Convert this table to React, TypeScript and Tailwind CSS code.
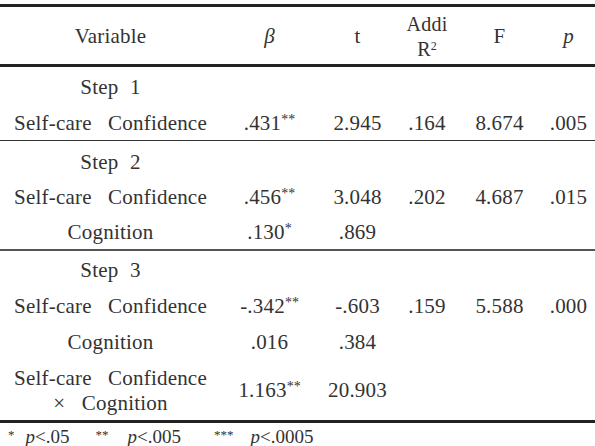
import React from "react";

type Row = {
  label: React.ReactNode;
  ws?: string;
  b?: string;
  star?: string;
  t?: string;
  r2?: string;
  f?: string;
  p?: string;
  h: string;
};

const cols = "grid grid-cols-[221px_97px_79px_60px_85px_53px]";

const Star = ({ s }: { s?: string }) =>
  s ? <span className="relative -top-[6px] text-[14px] tracking-[0px]">{s}</span> : null;

const DataRow = ({ row }: { row: Row }) => (
  <div className={`${cols} ${row.h} items-center text-center`}>
    <div className={row.ws ?? "[word-spacing:11px]"}>{row.label}</div>
    <div>
      {row.b}
      <Star s={row.star} />
    </div>
    <div>{row.t}</div>
    <div>{row.r2}</div>
    <div>{row.f}</div>
    <div>{row.p}</div>
  </div>
);

const step1: Row[] = [
  { label: "Step 1", ws: "[word-spacing:6px]", h: "h-[41px]" },
  { label: "Self-care Confidence", b: ".431", star: "**", t: "2.945", r2: ".164", f: "8.674", p: ".005", h: "h-[32px] pb-[1px]" },
];

const step2: Row[] = [
  { label: "Step 2", ws: "[word-spacing:6px]", h: "h-[39px] pt-[4px]" },
  { label: "Self-care Confidence", b: ".456", star: "**", t: "3.048", r2: ".202", f: "4.687", p: ".015", h: "h-[35px] pt-[1px]" },
  { label: "Cognition", b: ".130", star: "*", t: ".869", h: "h-[34px] pt-[2px]" },
];

const step3: Row[] = [
  { label: "Step 3", ws: "[word-spacing:6px]", h: "h-[39px] pt-[1px]" },
  { label: "Self-care Confidence", b: "-.342", star: "**", t: "-.603", r2: ".159", f: "5.588", p: ".000", h: "h-[34px]" },
  { label: "Cognition", b: ".016", t: ".384", h: "h-[38px]" },
  {
    label: (
      <div className="leading-[25px]">
        Self-care Confidence
        <br />× Cognition
      </div>
    ),
    b: "1.163",
    star: "**",
    t: "20.903",
    h: "h-[58px]",
  },
];

export default function App() {
  return (
    <div className="w-[595px] h-[446px] overflow-hidden bg-white text-[#333] text-[21px] tracking-[0.2px] font-['Liberation_Serif']">
      <div className="mt-[4px] border-t-[3px] border-[#222]" />
      <div className={`${cols} h-[57px] items-center text-center pt-[3px]`}>
        <div>Variable</div>
        <div className="italic">β</div>
        <div>t</div>
        <div className="text-[20px] leading-[25px]">
          Addi
          <br />
          R<sup className="text-[12px]">2</sup>
        </div>
        <div>F</div>
        <div className="italic">p</div>
      </div>
      <div className="border-t-[3px] border-[#222]" />
      {step1.map((r, i) => (
        <DataRow key={i} row={r} />
      ))}
      <div className="border-t border-[#333]" />
      {step2.map((r, i) => (
        <DataRow key={i} row={r} />
      ))}
      <div className="border-t-2 border-[#555]" />
      {step3.map((r, i) => (
        <DataRow key={i} row={r} />
      ))}
      <div className="border-t-[3px] border-[#222]" />
      {/* footnote, clipped by the frame like the source */}
      <div className="flex items-baseline pl-[8px] pt-[3px] leading-[22px] text-[19px] tracking-normal">
        <span className="relative -top-[4px] text-[13px]">*</span>
        <span className="ml-[11px]">
          <i>p</i>&lt;.05
        </span>
        <span className="ml-[26px] relative -top-[4px] text-[13px]">**</span>
        <span className="ml-[19px]">
          <i>p</i>&lt;.005
        </span>
        <span className="ml-[33px] relative -top-[4px] text-[13px]">***</span>
        <span className="ml-[17px]">
          <i>p</i>&lt;.0005
        </span>
      </div>
    </div>
  );
}
